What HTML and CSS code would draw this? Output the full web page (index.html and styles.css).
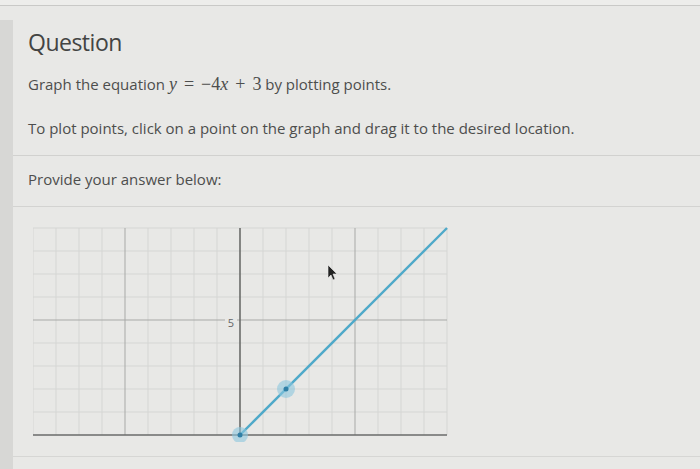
FILE: index.html
```html
<!DOCTYPE html>
<html lang="en">
<head>
    <meta charset="UTF-8">
    <title>Question</title>
    <link rel="stylesheet" href="styles.css">
</head>
<body>
    <div class="topbar"></div>
    <div class="page">
        <div class="side"></div>
        <div class="main">
            <div class="question">
                <h1>Question</h1>
                <p>Graph the equation <span class="math"><i>y</i><span class="op">=</span>&minus;4<i>x</i><span class="op">+</span>3</span> by plotting points.</p>
                <p>To plot points, click on a point on the graph and drag it to the desired location.</p>
            </div>
            <div class="answer">
                <p>Provide your answer below:</p>
            </div>
            <div class="graph-wrap">
                <svg class="graph" width="416" height="216" viewBox="0 0 416 216">
                    <g id="minor" stroke="#d5d6d4" stroke-width="1"></g>
                    <g id="major" stroke="#a8a9a7" stroke-width="1"></g>
                    <!-- axes -->
                    <line x1="0" y1="209" x2="414" y2="209" stroke="#6a6b6a" stroke-width="1.6"/>
                    <line x1="207" y1="2" x2="207" y2="209" stroke="#6a6b6a" stroke-width="1.6"/>
                    <rect x="192" y="89" width="12" height="14" fill="#e8e8e6"/>
                    <text x="198" y="101" class="tick">5</text>
                    <!-- plotted line -->
                    <line x1="207" y1="209" x2="414" y2="2" stroke="#4fa9c9" stroke-width="2.4"/>
                    <circle cx="207" cy="209" r="8" fill="#8cc6de" opacity="0.6"/>
                    <circle cx="207" cy="209" r="2.5" fill="#2f7fa6"/>
                    <circle cx="253" cy="163" r="9" fill="#8cc6de" opacity="0.6"/>
                    <circle cx="253" cy="163" r="2.5" fill="#2f7fa6"/>
                    <!-- mouse pointer -->
                    <path d="M295 39 L295 52 L298 49 L300 54 L302 53 L300 48 L304 48 Z" fill="#222" stroke="#eee" stroke-width="0.6"/>
                </svg>
            </div>
        </div>
    </div>
    <script>
        // draw the 1-unit grid, every 5th line darker
        const unit = 23, ox = 207, oy = 209;
        const ns = 'http://www.w3.org/2000/svg';
        function addLine(group, x1, y1, x2, y2) {
            let l = document.createElementNS(ns, 'line');
            l.setAttribute('x1', x1);
            l.setAttribute('y1', y1);
            l.setAttribute('x2', x2);
            l.setAttribute('y2', y2);
            document.getElementById(group).appendChild(l);
        }
        for (let i = -9; i <= 9; i++) {
            if (i === 0) continue;
            let x = ox + i * unit;
            addLine(i % 5 === 0 ? 'major' : 'minor', x, 2, x, oy);
        }
        for (let j = 1; j <= 9; j++) {
            let y = oy - j * unit;
            addLine(j % 5 === 0 ? 'major' : 'minor', 0, y, 414, y);
        }
    </script>
</body>
</html>
```

FILE: styles.css
```css
body {
    margin: 0;
    background-color: #e8e8e6;
    font-family: "Open Sans", Arial, sans-serif;
    color: #4d4e4d;
}

.topbar {
    height: 5px;
    border-bottom: 1px solid #c9c9c7;
    background-color: #ededeb;
}

.page {
    display: flex;
    margin-top: 14px;
    height: 449px;
}

.side {
    width: 13px;
    background-color: #d7d7d5;
}

.main {
    flex: 1;
}

.question {
    padding: 7px 15px 0;
    height: 128px;
    border-bottom: 1px solid #d1d1cf;
}

h1 {
    margin: 0 0 16px;
    font-size: 23px;
    font-weight: 500;
    color: #434443;
    line-height: 30px;
    letter-spacing: -0.5px;
}

p {
    margin: 0 0 22px;
    font-size: 15px;
    line-height: 22px;
}

.math {
    font-family: "Liberation Serif", "Times New Roman", serif;
    font-size: 18px;
}

.op {
    margin: 0 7px;
}

.answer {
    padding: 12px 15px 0;
    height: 38px;
    border-bottom: 1px solid #d3d3d1;
}

.graph-wrap {
    padding: 19px 0 0 20px;
    height: 230px;
    border-bottom: 1px solid #d6d6d4;
}

.graph {
    display: block;
}

.tick {
    font-family: "Open Sans", Arial, sans-serif;
    font-size: 11px;
    fill: #666;
    text-anchor: middle;
}
```
